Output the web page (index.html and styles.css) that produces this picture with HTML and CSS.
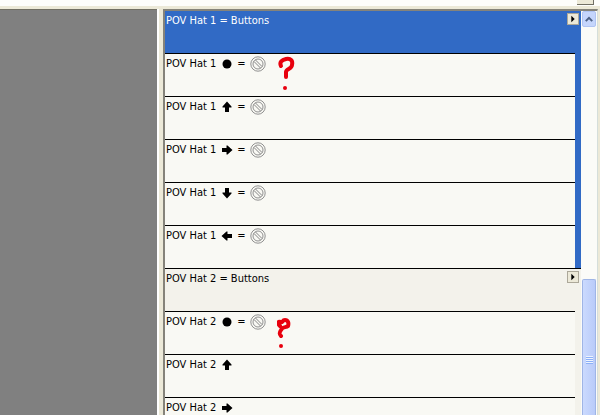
FILE: index.html
```
<!DOCTYPE html>
<html lang="en">
<head>
    <meta charset="UTF-8">
    <meta name="viewport" content="width=device-width, initial-scale=1.0">
    <title>POV Hat Assignments</title>
    <link rel="stylesheet" href="styles.css">
</head>
<body>

    <!-- shared icons -->
    <svg class="symbols" aria-hidden="true">
        <symbol id="dot" viewBox="0 0 12 12"><circle cx="6" cy="6" r="4.5"/></symbol>
        <symbol id="arrow" viewBox="0 0 12 12"><path d="M6 .5 L10.5 5.5 V6.5 H8 V11 H4 V6.5 H1.5 V5.5 Z"/></symbol>
        <symbol id="none" viewBox="0 0 16 16">
            <g fill="none" stroke="#858585">
                <circle cx="8" cy="8" r="7.2" stroke-width=".9"/>
                <circle cx="8" cy="8" r="5" stroke-width=".9"/>
                <path d="M4 5.5 L10.5 12 M5.5 4 L12 10.5" stroke-width="1"/>
            </g>
        </symbol>
    </svg>

    <div class="toolbar"><span class="toolbar-corner"></span></div>

    <div class="window">
        <div class="preview"></div>
        <div class="splitter"></div>

        <div class="list">
            <section class="group selected">
                <div class="group-header">
                    <span>POV Hat 1 = Buttons</span>
                    <button type="button" class="menu-btn" aria-label="POV Hat 1 options"><svg viewBox="0 0 12 12"><path d="M4 2 L8 6 L4 10 Z"/></svg></button>
                </div>
                <div class="row">
                    <span class="name">POV Hat 1</span>
                    <svg class="direction"><use href="#dot"/></svg>
                    <span class="equals">=</span>
                    <svg class="none"><use href="#none"/></svg>
                    <svg class="mark" viewBox="0 0 18 36"><path d="M4 10 C2 6 5 4 9 3 C14 2 16 5 15 9 C15 13 9 13 9 16 L9 21"/><circle cx="8" cy="32" r="2"/></svg>
                </div>
                <div class="row">
                    <span class="name">POV Hat 1</span>
                    <svg class="direction"><use href="#arrow"/></svg>
                    <span class="equals">=</span>
                    <svg class="none"><use href="#none"/></svg>
                </div>
                <div class="row">
                    <span class="name">POV Hat 1</span>
                    <svg class="direction right"><use href="#arrow"/></svg>
                    <span class="equals">=</span>
                    <svg class="none"><use href="#none"/></svg>
                </div>
                <div class="row">
                    <span class="name">POV Hat 1</span>
                    <svg class="direction down"><use href="#arrow"/></svg>
                    <span class="equals">=</span>
                    <svg class="none"><use href="#none"/></svg>
                </div>
                <div class="row">
                    <span class="name">POV Hat 1</span>
                    <svg class="direction left"><use href="#arrow"/></svg>
                    <span class="equals">=</span>
                    <svg class="none"><use href="#none"/></svg>
                </div>
            </section>

            <section class="group">
                <div class="group-header">
                    <span>POV Hat 2 = Buttons</span>
                    <button type="button" class="menu-btn" aria-label="POV Hat 2 options"><svg viewBox="0 0 12 12"><path d="M4 2 L8 6 L4 10 Z"/></svg></button>
                </div>
                <div class="row">
                    <span class="name">POV Hat 2</span>
                    <svg class="direction"><use href="#dot"/></svg>
                    <span class="equals">=</span>
                    <svg class="none"><use href="#none"/></svg>
                    <svg class="mark" viewBox="0 0 18 36"><path d="M3 12 C0 9 1 7 4 8 C6 9 5 6 8 6 C11 6 12 9 11 12 C9 14 6 12 4 16 C2 19 2 20 4 22"/><circle cx="4" cy="32" r="2"/></svg>
                </div>
                <div class="row">
                    <span class="name">POV Hat 2</span>
                    <svg class="direction"><use href="#arrow"/></svg>
                </div>
                <div class="row">
                    <span class="name">POV Hat 2</span>
                    <svg class="direction right"><use href="#arrow"/></svg>
                </div>
            </section>
        </div>

        <div class="scrollbar">
            <button type="button" class="scroll-up" aria-label="Scroll up"><svg viewBox="0 0 15 15"><path d="M3.5 9.5 L7.5 5.5 L11.5 9.5"/></svg></button>
            <div class="track">
                <div class="thumb"><span class="grip"></span></div>
            </div>
        </div>
    </div>

</body>
</html>
```
FILE: styles.css
```
* {
    box-sizing: border-box;
}

body {
    margin: 0;
    height: 100vh;
    display: flex;
    flex-direction: column;
    overflow: hidden;
    background-color: #ece9d8;
    color: #000;
    font-family: Tahoma, "DejaVu Sans Condensed", "Liberation Sans", sans-serif;
    font-size: 11px;
    line-height: 20px;
}

button {
    padding: 0;
}

svg {
    display: block;
    flex: none;
}

.symbols {
    position: absolute;
    width: 0;
    height: 0;
}

.toolbar {
    flex: none;
    display: flex;
    justify-content: flex-end;
    height: 9px;
    padding-right: 6px;
    background-color: #fdfdfb;
    border-bottom: 3px solid #ece9d8;
}

.toolbar-corner {
    width: 17px;
    height: 5px;
    background-color: #ece9d8;
    border-right: 1px solid #716f64;
    border-bottom: 1px solid #716f64;
}

.window {
    flex: 1;
    display: flex;
    min-height: 0;
    border-right: 2px solid #ece9d8;
}

.preview {
    flex: 0 0 157px;
    background-color: #808080;
    border-top: 1px solid #716f64;
}

.splitter {
    flex: 0 0 6px;
    background-color: #ece9d8;
    border-left: 2px solid #fff;
}

.list {
    flex: 1;
    overflow: hidden;
    border-top: 2px solid #85837a;
    border-left: 2px solid #85837a;
}

.group {
    padding-right: 6px;
    background-color: #f3f2eb;
}

.group-header {
    display: flex;
    justify-content: space-between;
    height: 42px;
    margin-right: -6px;
    padding: 0 2px 0 1px;
}

.selected {
    background-color: #316ac5;
    border-bottom: 1px solid #000;
}

.selected .group-header {
    color: #fff;
}

.menu-btn {
    width: 12px;
    height: 12px;
    margin-top: 2px;
    background-color: #ece9d8;
    border: 1px solid #aca899;
}

.menu-btn svg {
    width: 10px;
    height: 10px;
}

.row {
    display: flex;
    height: 43px;
    padding-left: 1px;
    background-color: #f9f9f4;
    border-top: 1px solid #000;
}

.name {
    width: 55px;
}

.direction {
    width: 12px;
    height: 12px;
    margin-top: 4px;
}

.right {
    transform: rotate(90deg);
}

.down {
    transform: rotate(180deg);
}

.left {
    transform: rotate(270deg);
}

.equals {
    width: 17px;
    text-align: center;
}

.none {
    width: 16px;
    height: 16px;
    margin-top: 2px;
}

.mark {
    width: 18px;
    height: 36px;
    margin: 2px 0 0 11px;
    fill: #e8000d;
}

.mark path {
    fill: none;
    stroke: #e8000d;
    stroke-width: 4;
    stroke-linecap: round;
    stroke-linejoin: round;
}

.scrollbar {
    flex: 0 0 16px;
    display: flex;
    flex-direction: column;
    padding: 0 1px;
    background-color: #fbfbf8;
    border-top: 2px solid #85837a;
    border-right: 1px solid #d5dedb;
}

.scroll-up {
    height: 16px;
    background-color: #c5d5fc;
    border: 1px solid #b0c4f3;
    border-radius: 2px;
}

.scroll-up svg {
    width: 12px;
    height: 13px;
}

.scroll-up path {
    fill: none;
    stroke: #4d6185;
    stroke-width: 2.5;
}

.track {
    flex: 1;
    display: flex;
    flex-direction: column;
    justify-content: flex-end;
}

/* thumb runs past the visible part of the track */
.thumb {
    height: 35%;
    display: flex;
    justify-content: center;
    padding-top: 76px;
    background: linear-gradient(to right, #cbdafe, #b9cbf9);
    border: 1px solid #9fb5e6;
    border-bottom: 0;
    border-radius: 2px 2px 0 0;
}

.grip {
    width: 7px;
    height: 8px;
    background: repeating-linear-gradient(#eef4fe 0 1px, #8cb0f8 1px 2px);
}
```
